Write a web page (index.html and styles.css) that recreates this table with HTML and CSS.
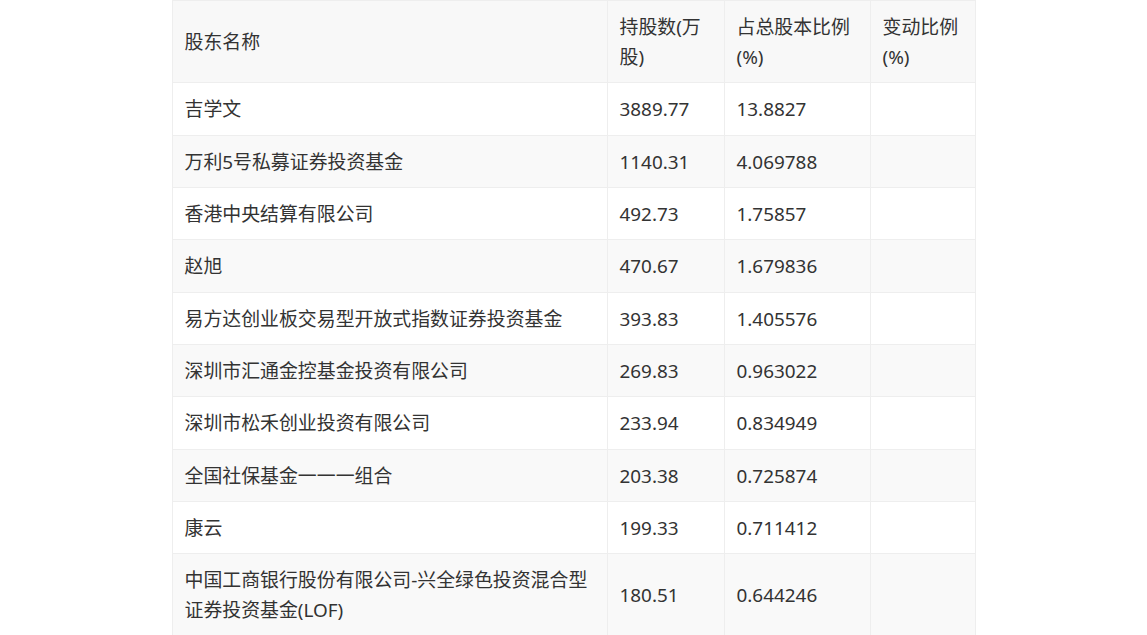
FILE: index.html
```html
<!DOCTYPE html>
<html lang="zh">
<head>
<meta charset="utf-8">
<link rel="stylesheet" href="styles.css">
</head>
<body>
<table class="holders">
  <colgroup>
    <col class="c-name"><col class="c-shares"><col class="c-ratio"><col class="c-change">
  </colgroup>
  <thead>
    <tr><th>股东名称</th><th>持股数(万股)</th><th>占总股本比例(%)</th><th>变动比例(%)</th></tr>
  </thead>
  <tbody>
    <tr><td>吉学文</td><td>3889.77</td><td>13.8827</td><td></td></tr>
    <tr><td>万利5号私募证券投资基金</td><td>1140.31</td><td>4.069788</td><td></td></tr>
    <tr><td>香港中央结算有限公司</td><td>492.73</td><td>1.75857</td><td></td></tr>
    <tr><td>赵旭</td><td>470.67</td><td>1.679836</td><td></td></tr>
    <tr><td>易方达创业板交易型开放式指数证券投资基金</td><td>393.83</td><td>1.405576</td><td></td></tr>
    <tr><td>深圳市汇通金控基金投资有限公司</td><td>269.83</td><td>0.963022</td><td></td></tr>
    <tr><td>深圳市松禾创业投资有限公司</td><td>233.94</td><td>0.834949</td><td></td></tr>
    <tr><td>全国社保基金一一一组合</td><td>203.38</td><td>0.725874</td><td></td></tr>
    <tr><td>康云</td><td>199.33</td><td>0.711412</td><td></td></tr>
    <tr><td>中国工商银行股份有限公司-兴全绿色投资混合型证券投资基金(LOF)</td><td>180.51</td><td>0.644246</td><td></td></tr>
  </tbody>
</table>
</body>
</html>
```

FILE: styles.css
```css
html, body {
  margin: 0;
  padding: 0;
  background: #ffffff;
}
.holders {
  margin: 0 auto;
  width: 803px;
  border-collapse: collapse;
  table-layout: fixed;
  font-family: "Noto Sans", "Noto Sans CJK SC", sans-serif;
  font-size: 18.9px;
  line-height: 30px;
  color: #333333;
}
.c-name { width: 435px; }
.c-shares { width: 117px; }
.c-ratio { width: 146px; }
.c-change { width: 105px; }
.holders th,
.holders td {
  border: 1px solid #eeeeee;
  padding: 11px 12px 10.33px 12px;
  text-align: left;
  vertical-align: middle;
  font-weight: normal;
}
.holders thead th {
  background: #f8f8f8;
}
.holders tbody tr:nth-child(even) td {
  background: #f9f9f9;
}
```
